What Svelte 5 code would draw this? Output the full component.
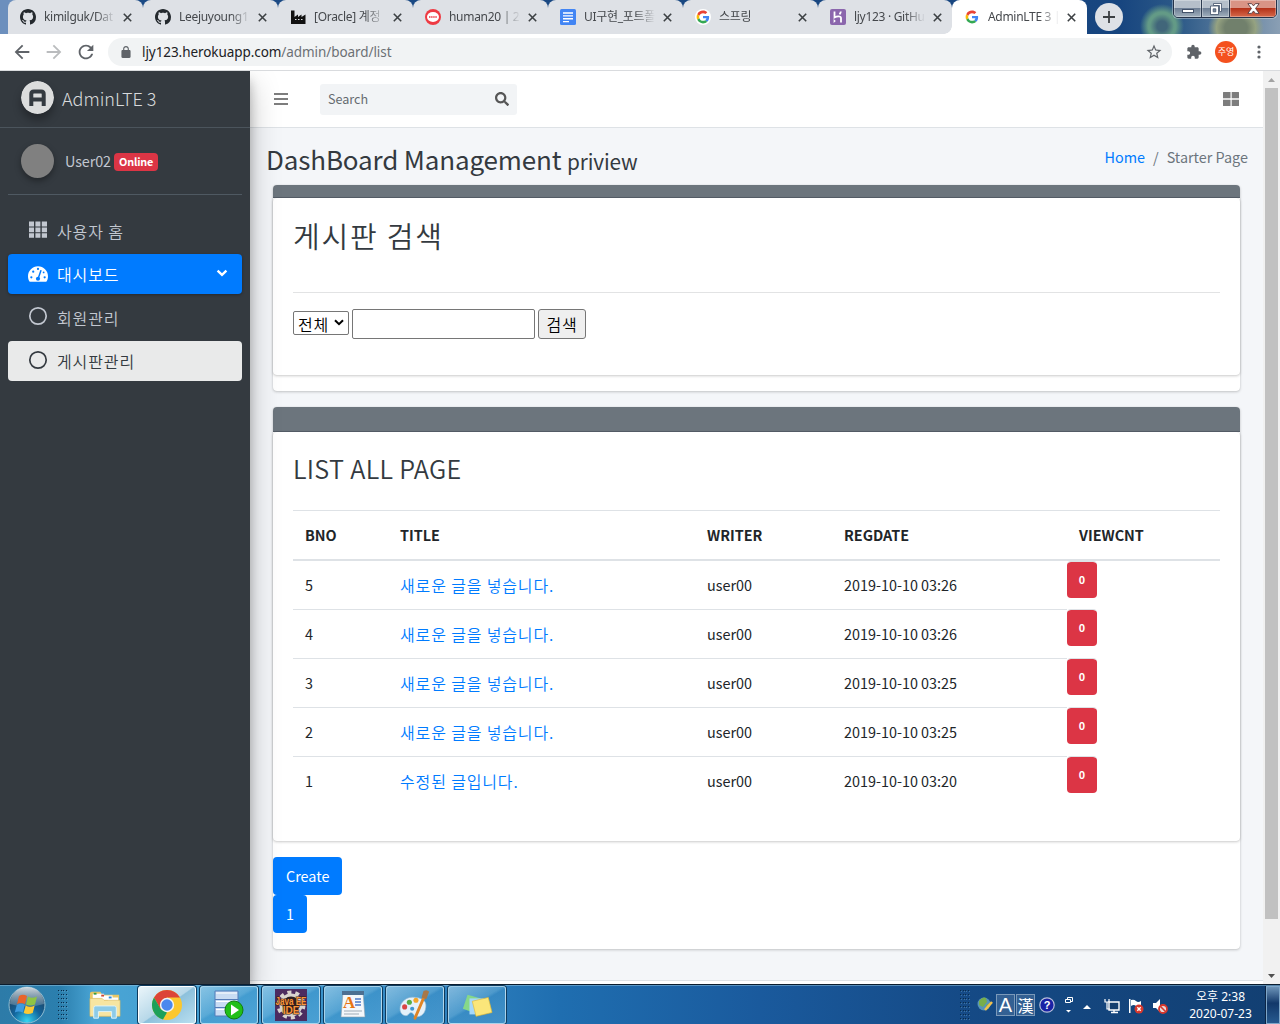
<script>
  const tabs = [
    { icon: 'github', title: 'kimilguk/Dat' },
    { icon: 'github', title: 'Leejuyoung1' },
    { icon: 'factory', title: '[Oracle] 계정' },
    { icon: 'cafe', title: 'human20 | 20' },
    { icon: 'docs', title: 'UI구현_포트폴' },
    { icon: 'google', title: '스프링' },
    { icon: 'heroku', title: 'ljy123 · GitHu' },
    { icon: 'google', title: 'AdminLTE 3 |', active: true },
  ];

  const rows = [
    { bno: 5, title: '새로운 글을 넣습니다.', writer: 'user00', date: '2019-10-10 03:26', views: 0 },
    { bno: 4, title: '새로운 글을 넣습니다.', writer: 'user00', date: '2019-10-10 03:26', views: 0 },
    { bno: 3, title: '새로운 글을 넣습니다.', writer: 'user00', date: '2019-10-10 03:25', views: 0 },
    { bno: 2, title: '새로운 글을 넣습니다.', writer: 'user00', date: '2019-10-10 03:25', views: 0 },
    { bno: 1, title: '수정된 글입니다.', writer: 'user00', date: '2019-10-10 03:20', views: 0 },
  ];
  const gripDots = Array.from({ length: 32 });
</script>

{#snippet favicon(name)}
  {#if name === 'github'}
    <svg class="fav" viewBox="0 0 16 16"><path fill="#24292e" d="M8 0C3.58 0 0 3.58 0 8c0 3.54 2.29 6.53 5.47 7.59.4.07.55-.17.55-.38 0-.19-.01-.82-.01-1.49-2.01.37-2.53-.49-2.69-.94-.09-.23-.48-.94-.82-1.13-.28-.15-.68-.52-.01-.53.63-.01 1.08.58 1.23.82.72 1.21 1.87.87 2.33.66.07-.52.28-.87.51-1.07-1.78-.2-3.64-.89-3.64-3.95 0-.87.31-1.59.82-2.15-.08-.2-.36-1.02.08-2.12 0 0 .67-.21 2.2.82.64-.18 1.32-.27 2-.27.68 0 1.36.09 2 .27 1.53-1.04 2.2-.82 2.2-.82.44 1.1.16 1.92.08 2.12.51.56.82 1.27.82 2.15 0 3.07-1.87 3.75-3.65 3.95.29.25.54.73.54 1.48 0 1.07-.01 1.93-.01 2.2 0 .21.15.46.55.38A8.013 8.013 0 0016 8c0-4.42-3.58-8-8-8z" /></svg>
  {:else if name === 'factory'}
    <svg class="fav" viewBox="0 0 16 16"><path fill="#111" d="M1 15V1.500h3.500V8L8 5.500V8l3.500-2.500V8L15.500 5.500V15z" /><path fill="#dee1e6" d="M5 10h1.500v1H5zM8 10h1.500v1H8zM11 10h1.500v1H11z" /></svg>
  {:else if name === 'cafe'}
    <svg class="fav" viewBox="0 0 16 16"><circle cx="8" cy="8" r="8" fill="#ee3a43" /><ellipse cx="8" cy="8" rx="6" ry="5" fill="#fff" /><path d="M4 8h8" stroke="#ee3a43" stroke-width="1.600" stroke-dasharray="1.500 .6" /></svg>
  {:else if name === 'docs'}
    <svg class="fav" viewBox="0 0 16 16"><rect width="16" height="16" rx="1.500" fill="#4285f4" /><path stroke="#fff" stroke-width="1.400" d="M3 4h10M3 6.900h10M3 9.800h10M3 12.600h6" /></svg>
  {:else if name === 'heroku'}
    <svg class="fav" viewBox="0 0 16 16"><rect width="16" height="16" rx="2" fill="#8b66ad" /><path fill="none" stroke="#fff" stroke-width="1.800" d="M4.500 2.500v6c2-1 6.500-2 6.500.5v4.500M10.800 2.500c0 1-.5 2-1.300 2.800" /><path fill="#fff" d="M3.600 10v4l2.200-2z" /></svg>
  {:else}
    <svg class="fav" viewBox="-6 -6 60 60"><circle cx="24" cy="24" r="30" fill="#fff" /><path fill="#EA4335" d="M24 9.500c3.540 0 6.710 1.220 9.210 3.600l6.850-6.850C35.900 2.380 30.470 0 24 0 14.620 0 6.510 5.380 2.560 13.220l7.980 6.190C12.430 13.720 17.740 9.500 24 9.500z" /><path fill="#4285F4" d="M46.980 24.550c0-1.570-.15-3.090-.38-4.550H24v9.020h12.940c-.58 2.960-2.260 5.480-4.780 7.180l7.730 6c4.510-4.180 7.090-10.360 7.090-17.650z" /><path fill="#FBBC05" d="M10.530 28.590c-.48-1.450-.76-2.990-.76-4.590s.27-3.140.76-4.590l-7.980-6.190C.92 16.460 0 20.120 0 24c0 3.880.92 7.540 2.560 10.780l7.970-6.190z" /><path fill="#34A853" d="M24 48c6.480 0 11.930-2.130 15.890-5.810l-7.730-6c-2.150 1.450-4.920 2.300-8.160 2.300-6.260 0-11.570-4.220-13.470-9.910l-7.980 6.190C6.510 42.620 14.620 48 24 48z" /></svg>
  {/if}
{/snippet}

{#snippet grip()}
  <div class="grip">{#each gripDots as _}<i></i>{/each}</div>
{/snippet}

<div class="screen">
  <div class="tabstrip">
    {#each tabs as tab}
      <div class="tab" class:active={tab.active}>
        {@render favicon(tab.icon)}
        <span class="tab-title">{tab.title}</span>
        <svg class="close" viewBox="0 0 8 8"><path d="M.7.7l6.600 6.600M7.300.7L.7 7.300" /></svg>
      </div>
    {/each}
    <div class="newtab"><svg viewBox="0 0 14 14"><path d="M7 1v12M1 7h12" /></svg></div>
    <div class="wallpaper"></div>
    <div class="winctl">
      <span class="min"><i></i></span>
      <span class="max"><svg viewBox="0 0 12 12"><path fill="#fff" stroke="#43526a" stroke-width=".8" fill-rule="evenodd" d="M3.500.5h8v8h-2v-6h-6z" /><path fill="#fff" stroke="#43526a" stroke-width=".8" fill-rule="evenodd" d="M.5 3h8v8.500h-8zM3.200 5.800v3h2.600v-3z" /></svg></span>
      <span class="cls"><svg viewBox="0 0 12 10"><path fill="#fff" stroke="#53393d" stroke-width=".8" d="M.8.500h3.400L6 2.600 7.800.500h3.400L7.900 5l3.300 4.500H7.800L6 7.300 4.200 9.500H.8L4.100 5z" /></svg></span>
    </div>
  </div>

  <div class="toolbar">
    <svg class="nav-ic" viewBox="0 0 24 24"><path fill="#5f6368" d="M20 11H7.830l5.590-5.590L12 4l-8 8 8 8 1.410-1.410L7.830 13H20v-2z" /></svg>
    <svg class="nav-ic" viewBox="0 0 24 24"><path fill="#babcbe" d="M12 4l-1.410 1.410L16.170 11H4v2h12.170l-5.580 5.590L12 20l8-8z" /></svg>
    <svg class="nav-ic" viewBox="0 0 24 24"><path fill="#5f6368" d="M17.650 6.350C16.200 4.900 14.210 4 12 4c-4.420 0-7.990 3.580-7.990 8s3.570 8 7.990 8c3.730 0 6.840-2.550 7.730-6h-2.080c-.82 2.330-3.040 4-5.650 4-3.310 0-6-2.690-6-6s2.690-6 6-6c1.660 0 3.140.69 4.220 1.780L13 11h7V4l-2.350 2.350z" /></svg>
    <div class="omnibox">
      <svg class="lock" viewBox="4 1 16 21"><path fill="#5f6368" d="M18 8h-1V6c0-2.760-2.240-5-5-5S7 3.240 7 6v2H6c-1.100 0-2 .9-2 2v10c0 1.100.9 2 2 2h12c1.100 0 2-.9 2-2V10c0-1.100-.9-2-2-2zM9 6c0-1.660 1.340-3 3-3s3 1.340 3 3v2H9V6z" /></svg>
      <span class="url">ljy123.herokuapp.com<em>/admin/board/list</em></span>
      <svg class="star" viewBox="0 0 24 24"><path fill="#5f6368" d="M22 9.240l-7.190-.62L12 2 9.190 8.630 2 9.240l5.460 4.730L5.820 21 12 17.270 18.180 21l-1.630-7.030L22 9.240zM12 15.400l-3.760 2.270 1-4.280-3.320-2.880 4.380-.38L12 6.100l1.710 4.040 4.380.38-3.320 2.880 1 4.280L12 15.400z" /></svg>
    </div>
    <svg class="puzzle" viewBox="0 0 24 24"><path fill="#5f6368" d="M20.500 11H19V7c0-1.100-.9-2-2-2h-4V3.500C13 2.120 11.880 1 10.500 1S8 2.120 8 3.500V5H4c-1.100 0-1.990.9-1.990 2v3.800H3.500c1.490 0 2.700 1.210 2.700 2.700s-1.210 2.700-2.700 2.700H2V20c0 1.100.9 2 2 2h3.800v-1.500c0-1.490 1.210-2.700 2.700-2.700 1.490 0 2.700 1.210 2.700 2.700V22H17c1.100 0 2-.9 2-2v-4h1.500c1.380 0 2.500-1.120 2.500-2.500S21.880 11 20.500 11z" /></svg>
    <div class="profile">주영</div>
    <svg class="kebab" viewBox="0 0 4 14"><circle cx="2" cy="2" r="1.600" /><circle cx="2" cy="7" r="1.600" /><circle cx="2" cy="12" r="1.600" /></svg>
  </div>

  <div class="page">
    <aside class="sidebar">
      <div class="brand">
        <svg class="logo" viewBox="0 0 33 33"><circle cx="16.500" cy="16.500" r="16.500" fill="#dcdddd" /><path fill="none" stroke="#343a40" stroke-width="4" d="M10.300 25V13q0-2.500 2.500-2.500h7.400q2.500 0 2.500 2.500v12M10.300 18.500h12.400" /></svg>
        <span>AdminLTE 3</span>
      </div>
      <div class="user"><i class="avatar"></i><span class="uname">User02</span><b class="online">Online</b></div>
      <nav>
        <div class="item">
          <svg class="solid" viewBox="0 0 20 17"><path fill="#c2c7d0" d="M1 0h5v5H1zM7.400 0h5v5h-5zM13.800 0h5.200v5h-5.200zM1 6h5v4.700H1zM7.400 6h5v4.700h-5zM13.800 6h5.200v4.700h-5.200zM1 11.700h5v4.600H1zM7.400 11.700h5v4.600h-5zM13.800 11.700h5.200v4.600h-5.200z" /></svg>
          <span>사용자 홈</span>
        </div>
        <div class="item blue">
          <svg class="solid" viewBox="0 0 576 512"><path fill="#fff" d="M288 32C128.940 32 0 160.940 0 320c0 52.800 14.250 102.260 39.060 144.800 5.610 9.620 16.300 15.200 27.440 15.200h443c11.140 0 21.830-5.580 27.440-15.200C561.750 422.260 576 372.800 576 320c0-159.060-128.940-288-288-288z" /><g fill="#007bff"><circle cx="288" cy="110" r="32" /><circle cx="96" cy="352" r="32" /><circle cx="150" cy="190" r="32" /><circle cx="480" cy="352" r="32" /><circle cx="450" cy="210" r="26" /></g><path stroke="#007bff" stroke-width="42" stroke-linecap="round" d="M370 160L296 380" /><circle cx="288" cy="392" r="60" fill="#007bff" /></svg>
          <span>대시보드</span>
          <svg class="chev" viewBox="0 0 12 8"><path d="M1.600 1.600L6 5.800l4.400-4.200" /></svg>
        </div>
        <div class="item"><svg viewBox="0 0 20 20"><circle cx="10" cy="10" r="8.200" fill="none" stroke="#c2c7d0" stroke-width="1.700" /></svg><span>회원관리</span></div>
        <div class="item light"><svg viewBox="0 0 20 20"><circle cx="10" cy="10" r="8.200" fill="none" stroke="#343a40" stroke-width="1.700" /></svg><span>게시판관리</span></div>
      </nav>
    </aside>

    <main>
      <div class="navbar">
        <svg class="bars" viewBox="0 0 14 12"><path d="M0 1h14M0 6h14M0 11h14" stroke="#7d7d7d" stroke-width="2" /></svg>
        <div class="search"><span>Search</span><svg viewBox="0 0 512 512"><path fill="#565656" d="M505 442.700L405.300 343c-4.500-4.500-10.600-7-17-7H372c27.600-35.300 44-79.700 44-128C416 93.100 322.900 0 208 0S0 93.100 0 208s93.100 208 208 208c48.300 0 92.700-16.400 128-44v16.300c0 6.400 2.500 12.500 7 17l99.700 99.700c9.400 9.400 24.600 9.400 33.900 0l28.300-28.300c9.400-9.400 9.400-24.600.1-34zM208 336c-70.700 0-128-57.200-128-128 0-70.700 57.200-128 128-128 70.700 0 128 57.200 128 128 0 70.700-57.200 128-128 128z" /></svg></div>
        <svg class="thl" viewBox="0 0 16 14"><path fill="#7d7d7d" d="M.5 0h7v6.300H0V.5q0-.5.5-.5zM8.700 0h6.800q.5 0 .5.500v5.800H8.700zM0 7.700h7.500V14h-7q-.5 0-.5-.5zM8.700 7.700H16v5.800q0 .5-.5.500H8.700z" /></svg>
      </div>

      <div class="content-head">
        <h1>DashBoard Management <small>priview</small></h1>
        <div class="crumb"><a href="#home">Home</a><span>/</span><span class="here">Starter Page</span></div>
      </div>

      <section class="card first">
        <div class="cap"></div>
        <div class="inner">
          <h3 class="kr-head">게시판 검색</h3>
          <hr />
          <div class="form">
            <div class="select"><span>전체</span><svg viewBox="0 0 10 7"><path d="M1 1.200l4 4 4-4" /></svg></div>
            <div class="input"></div>
            <div class="btn">검색</div>
          </div>
        </div>
      </section>

      <section class="card second">
        <div class="cap"></div>
        <div class="inner">
          <h3>LIST ALL PAGE</h3>
          <div class="table">
            <div class="row head"><span>BNO</span><span>TITLE</span><span>WRITER</span><span>REGDATE</span><span>VIEWCNT</span></div>
            {#each rows as r}
              <div class="row">
                <span>{r.bno}</span><span class="link">{r.title}</span><span>{r.writer}</span><span>{r.date}</span><b class="badge">{r.views}</b>
              </div>
            {/each}
          </div>
        </div>
        <div class="actions">
          <div class="primary">Create</div>
          <div class="primary">1</div>
        </div>
      </section>
      <footer></footer>
    </main>

    <div class="scroll">
      <svg viewBox="0 0 17 17"><path fill="#a3a3a3" d="M5 11l3.500-4 3.500 4z" /></svg>
      <div class="thumb"></div>
      <svg viewBox="0 0 17 17"><path fill="#505050" d="M5 7l3.500 4L12 7z" /></svg>
    </div>
  </div>

  <div class="taskbar">
    <svg class="orb" viewBox="0 0 38 38">
      <defs>
        <radialGradient id="orbfill" cx=".5" cy=".95" r=".9"><stop offset="0" stop-color="#35d6f2" /><stop offset=".45" stop-color="#12649c" /><stop offset="1" stop-color="#24384f" /></radialGradient>
        <linearGradient id="gloss" x2="0" y2="1"><stop offset="0" stop-color="#e4edf2" stop-opacity=".9" /><stop offset="1" stop-color="#9fb6c4" stop-opacity=".3" /></linearGradient>
      </defs>
      <circle cx="19" cy="19" r="18" fill="url(#orbfill)" stroke="#8fbdd2" />
      <path fill="url(#gloss)" d="M2 18a17 17 0 0134 0q-17 5-34 0z" />
      <path fill="#e9642a" d="M11 10q4-2.500 8 0l-2 8q-4-2-8 0z" /><path fill="#8fc444" d="M20 10.500q4 2.500 9 0l-2 8q-5 2-9 0z" />
      <path fill="#3d9be0" d="M8.800 19q4-2.500 8 0l-2 7.500q-4-2-8 0z" /><path fill="#fbc935" d="M17.700 19.500q4 2.500 9 0l-2 7.500q-5 2-9 0z" />
    </svg>
    {@render grip()}
    <div class="task plain"><svg viewBox="0 0 34 30"><path fill="#e8c765" d="M1 3q0-2 2-2h9l2 3h18v21q0 2-2 2H3q-2 0-2-2z" /><path fill="#fff" d="M4 3h12v5H4zM12 5h13v5H12zM20 7h11v5H20z" /><path fill="#3a9b3d" d="M5 2h3v2H5z" /><path fill="#cc4734" d="M13 4h3v2h-3z" /><path fill="#2e8bd8" d="M21 6h3v2h-3z" /><path fill="#f7e5a1" stroke="#d7b75c" stroke-width=".6" d="M1 8h13l2 2h17v17H1z" /><path fill="#8ccbe8" stroke="#dff3fb" d="M5 18q0-2 2-2h20q2 0 2 2v11h-5v-7H10v7H5z" /></svg></div>
    <div class="task on"><svg viewBox="0 0 32 32"><circle cx="16" cy="16" r="15" fill="#fbc72e" /><path fill="#dc4437" d="M3 8.500A15 15 0 0129 8.500H16L9.500 20z" /><path fill="#1da05a" d="M3 8.500l6.500 11.300 6.500 3.700-4 7A15 15 0 013 8.500z" /><circle cx="16" cy="16" r="7.200" fill="#f2f4f5" /><circle cx="16" cy="16" r="5.700" fill="#4a88ee" /></svg></div>
    <div class="task"><svg viewBox="0 0 32 32"><path fill="#c9dcf3" stroke="#557cb9" d="M2 2h23v25H2z" /><path stroke="#557cb9" d="M2 10.500h23M2 18.500h23" /><path stroke="#fff" d="M3 4h21M3 12.500h21M3 20.500h21" /><circle cx="21" cy="21" r="9" fill="#21bf18" stroke="#117c0d" /><path fill="#fff" d="M18 15.500l8 5.500-8 5.500z" /></svg></div>
    <div class="task"><svg viewBox="0 0 32 32"><rect width="32" height="32" fill="#4c2c60" /><circle cx="16" cy="16" r="12.500" fill="none" stroke="#d9d4cf" stroke-width="4" stroke-dasharray="4 3.850" /><circle cx="16" cy="16" r="10" fill="#2a2024" stroke="#d9d4cf" stroke-width="3" /><text x="16" y="15.500" text-anchor="middle" textLength="31" lengthAdjust="spacingAndGlyphs">Java EE</text><text x="16" y="24.500" text-anchor="middle">IDE</text></svg></div>
    <div class="task"><svg viewBox="0 0 32 32"><path fill="#f4f7fa" stroke="#8a9dad" stroke-width=".6" d="M6 3h20l2 25H4z" /><path fill="#4c6f91" d="M5 2h22v4H5z" /><text class="wp" x="6" y="19">A</text><path stroke="#4c79c9" stroke-width="1.500" d="M18 10h6M18 13h6M18 16h6" /><path stroke="#9eabb6" d="M7 22h18M7 25h15" /></svg></div>
    <div class="task"><svg viewBox="0 0 34 32"><path fill="#e4f1fa" stroke="#93b8d3" stroke-width=".7" d="M18 8C8 6 1 13 1 20s7 9 9 6 5-2 6 1 10 2 12-6-1-12-10-13z" /><circle cx="6" cy="18" r="2.700" fill="#d94545" /><circle cx="11" cy="13" r="2.700" fill="#57ae45" /><circle cx="18" cy="11" r="2.700" fill="#f3a72c" /><circle cx="14" cy="20" r="2.200" fill="#4196cf" /><path stroke="#e08525" stroke-width="3" stroke-linecap="round" d="M26 9L17 30" /><path fill="#a77747" d="M24 8l2-7q4-2 6 1l-3 8z" /></svg></div>
    <div class="task"><svg viewBox="0 0 34 32"><path fill="#86d889" d="M7 5l14 4-5 16L2 20z" /><path fill="#a5d8fb" d="M9 9h15v17H9z" /><path fill="#fbe67a" stroke="#e0b934" stroke-width=".7" d="M12 12l17-4 4 16-17 4z" /></svg></div>

    <div class="tray">
      {@render grip()}
      <svg class="globe" viewBox="0 0 16 18"><circle cx="7" cy="8" r="6.500" fill="#5894b9" /><path fill="#78ae4b" d="M2 5q4-5 7-3l1 4-4 5-4-2zM9 9l4-2-1 5-3 2z" /><path stroke="#f1c14d" stroke-width="2.500" d="M15 6l-7 8" /></svg>
      <span class="ime a">A</span><span class="ime h">漢</span>
      <svg class="help" viewBox="0 0 16 16"><circle cx="8" cy="8" r="7.200" fill="#1a22a5" stroke="#b9bfdb" stroke-width="1.200" /><text x="8" y="12" text-anchor="middle">?</text></svg>
      <svg class="mini" viewBox="0 0 10 18"><path fill="none" stroke="#fff" d="M3.500 4V1.500h5v4H6M1.500 3.500h5v3h-5z" /><path fill="#fff" d="M2 14h5l-2.500 2.500z" /></svg>
      <svg class="up" viewBox="0 0 8 4"><path fill="#fff" d="M0 4l4-4 4 4z" /></svg>
      <svg class="ti" viewBox="0 0 16 16"><path fill="#16406f" stroke="#fff" stroke-width="1.400" d="M5 4h10v8H5zM7 14.500h7M10 12v2" /><path fill="none" stroke="#fff" stroke-width="1.200" d="M1 1v3h4V1M3 4v7h3" /></svg>
      <svg class="ti" viewBox="0 0 16 16"><path fill="#fff" d="M1 1h1.500v14H1zM3 2q3-1 5 1t5 0v6q-3 1-5-1T3 8z" /><circle cx="11" cy="11" r="4.500" fill="#d7372c" /><path stroke="#fff" stroke-width="1.400" d="M9.300 9.300l3.400 3.400M12.700 9.300l-3.400 3.400" /></svg>
      <svg class="ti" viewBox="0 0 16 16"><path fill="#fff" d="M1 5h3l4-4v13l-4-4H1z" /><circle cx="11" cy="11" r="4" fill="#e9d9d9" stroke="#d7372c" stroke-width="1.800" /><path stroke="#d7372c" stroke-width="1.600" d="M8.300 8.300l5.400 5.400" /></svg>
      <div class="clock"><span>오후 2:38</span><span>2020-07-23</span></div>
      <div class="desk"></div>
    </div>
  </div>
</div>

<style>
  :global(body) { margin: 0; overflow: hidden; }
  .screen, .screen * { box-sizing: border-box; }
  svg { display: block; flex: none; }
  .screen { width: 1280px; height: 1024px; display: flex; flex-direction: column; overflow: hidden; font: 14.4px/24px "Noto Sans CJK KR", "Liberation Sans", sans-serif; color: #212529; }

  .tabstrip { height: 34px; flex: none; display: flex; position: relative; padding-left: 8px; background: linear-gradient(90deg, #6c8fbd 0, #6c8fbd 12px, #1b4a85 130px, #17457f 1120px, #2d5a88 1180px, #8a9fb4 1280px); }
  .tab { width: 135px; height: 34px; flex: none; display: flex; align-items: center; padding-left: 12px; background: #dee1e6; border-radius: 8px 8px 0 0; position: relative; font: 12px/16px "Noto Sans", "Noto Sans CJK KR", sans-serif; color: #45484c; }
  .tab:nth-child(-n+6)::after { content: ""; position: absolute; right: -1px; top: 8px; width: 1px; height: 19px; background: #85898e; }
  .tab:nth-child(7) { width: 134px; border-bottom-right-radius: 0; }
  .tab.active { background: #fff; }
  .tab.active::before { content: ""; position: absolute; left: -8px; bottom: 0; width: 8px; height: 8px; background: radial-gradient(circle at 0 0, #dee1e6 7.500px, #fff 8px); }
  .fav { width: 16px; height: 16px; }
  .tab-title { width: 73px; margin-left: 8px; overflow: hidden; white-space: nowrap; mask-image: linear-gradient(90deg, #000 70%, transparent 98%); letter-spacing: -.3px; }
  .close { width: 9px; height: 9px; margin-left: 6px; stroke: #3c4043; stroke-width: 1.400; }
  .newtab { width: 28px; height: 28px; margin: 3px 0 0 8px; border-radius: 50%; background: #dee1e6; display: grid; place-items: center; }
  .newtab svg { width: 14px; height: 14px; stroke: #3c4043; stroke-width: 1.800; }
  .wallpaper { flex: 1; background: radial-gradient(circle at 39px 26px, #41667a 0 5px, #639a86 12px 14px, transparent 22px), radial-gradient(ellipse 28px 24px at 113px 28px, #71806c 0 40%, #95a281 70%, transparent 100%); }
  .winctl { position: absolute; right: 3px; top: -1px; width: 104px; height: 19px; display: flex; border: 1px solid #26344a; border-radius: 0 0 5px 5px; overflow: hidden; box-shadow: 0 0 0 1px #ffffff55; }
  .winctl span { display: grid; place-items: center; background: linear-gradient(#b5bfca 0 48%, #6e7f95 50%, #a1b0bd); border-right: 1px solid #2c3b50; box-shadow: inset 0 0 0 1px #ffffff50; }
  .winctl .min { width: 28px; } .winctl .max { width: 28px; }
  .winctl .cls { flex: 1; border: 0; background: linear-gradient(#d99485 0 46%, #b5331a 50%, #d6694b); }
  .min i { width: 12px; height: 4px; margin-top: 4px; background: #fff; border: 1px solid #43526a; }
  .max svg { width: 12px; height: 12px; } .cls svg { width: 13px; height: 11px; }

  .toolbar { height: 37px; flex: none; display: flex; align-items: center; background: #fff; border-bottom: 1px solid #d9dbde; padding: 0 0 0 11px; }
  .nav-ic { width: 22px; height: 22px; margin-right: 10px; }
  .omnibox { width: 1064px; height: 28px; margin-left: 1px; border-radius: 14px; background: #f1f3f4; display: flex; align-items: center; padding: 0 9px 0 13px; }
  .lock { width: 10px; height: 12px; }
  .url { margin-left: 11px; flex: 1; font: 13.500px/20px "Noto Sans", sans-serif; letter-spacing: -.07px; color: #202124; white-space: nowrap; }
  .url em { font-style: normal; color: #6c7074; }
  .star { width: 18px; height: 18px; }
  .puzzle { width: 16px; height: 16px; margin-left: 14px; }
  .profile { width: 22px; height: 22px; margin-left: 13px; border-radius: 50%; background: #f4511e; color: #fff; font-size: 9px; line-height: 21px; text-align: center; }
  .kebab { width: 4px; height: 14px; margin-left: 20px; fill: #5f6368; }

  .page { height: 913px; flex: none; display: flex; background: #f4f6f9; overflow: hidden; }
  .sidebar { width: 250px; flex: none; background: #343a40; color: #c2c7d0; z-index: 1; box-shadow: 0 14px 28px rgba(0,0,0,.25), 0 10px 10px rgba(0,0,0,.22); }
  .brand { height: 57px; display: flex; align-items: center; padding: 0 0 2px 21px; border-bottom: 1px solid #4b545c; font-size: 18px; font-weight: 300; color: #d8dadc; }
  .brand span { margin-left: 8px; }
  .logo { width: 33px; height: 33px; margin-top: -2px; border-radius: 50%; box-shadow: 0 6px 8px rgba(0,0,0,.3); }
  .user { height: 67px; margin: 0 8px; padding-left: 13px; display: flex; align-items: center; border-bottom: 1px solid #4f5962; }
  .avatar { width: 33px; height: 34px; border-radius: 50%; background: #808080; box-shadow: 0 3px 6px rgba(0,0,0,.35); }
  .uname { margin: 0 3px 0 11px; letter-spacing: -.1px; }
  .online { height: 18px; padding: 0 5px; border-radius: 4px; background: #dc3545; color: #fff; font-size: 10.800px; letter-spacing: -.15px; line-height: 17px; margin-top: 2px; }
  nav { padding: 15px 8px 0; }
  .item { height: 40px; margin-bottom: 3.600px; padding: 1px 14px 0 20px; display: flex; align-items: center; border-radius: 4px; font-size: 16px; font-weight: 350; letter-spacing: .9px; }
  .item > svg:first-child { width: 20px; height: 20px; margin-top: -3px; }
  .item > svg.solid { margin-top: -1px; }
  .item span { margin-left: 9px; flex: 1; }
  .item.blue { background: #007bff; color: #fff; box-shadow: 0 1px 3px rgba(0,0,0,.3); }
  .item.light { background: #e9eaea; color: #343a40; }
  .item .chev { width: 12px; height: 8px; margin-top: -3px; fill: none; stroke: #fff; stroke-width: 2.400; }

  main { width: 1013px; display: flex; flex-direction: column; }
  .navbar { height: 57px; flex: none; background: #fff; border-bottom: 1px solid #dee2e6; display: flex; align-items: center; padding: 0 24px; }
  .bars { width: 14px; height: 12px; }
  .search { width: 197px; height: 31px; margin-left: 32px; border-radius: 3px; background: #f2f4f6; display: flex; align-items: center; justify-content: space-between; padding: 0 8px; font-size: 12.600px; color: #656b70; }
  .search svg { width: 14px; height: 14px; }
  .thl { width: 16px; height: 14px; margin-left: auto; }
  .content-head { height: 57px; flex: none; display: flex; justify-content: space-between; padding: 14px 15px 0 16px; }
  h1 { margin: 0; font-weight: 400; font-size: 26px; letter-spacing: -.15px; line-height: 34px; color: #343a40; white-space: pre; }
  small { font-size: 20.800px; }
  .crumb { display: flex; gap: 8px; line-height: 30px; color: #6c757d; }
  .crumb a { color: #007bff; text-decoration: none; }
  .card { margin: 0 23px 16px; flex: none; background: #fff; border-radius: 4px; box-shadow: 0 0 1px rgba(0,0,0,.125), 0 1px 3px rgba(0,0,0,.2); }
  .card .cap { background: #6c757d; border-bottom: 1px solid #57606a; border-radius: 4px 4px 0 0; }
  .first { height: 206px; } .first .cap { height: 13px; }
  .second { height: 542px; } .second .cap { height: 25px; }
  .inner { padding: 20px; border-radius: 4px; box-shadow: 0 0 1px rgba(0,0,0,.125), 0 1px 3px rgba(0,0,0,.2); }
  .first .inner { height: 177px; } .second .inner { height: 409px; }
  h3 { margin: 0; font-weight: 350; font-size: 25.200px; letter-spacing: .3px; line-height: 32px; height: 58px; color: #343a40; }
  h3.kr-head { font-size: 29px; letter-spacing: 1.800px; height: 74px; line-height: 34px; }
  hr { margin: 0 0 16px; border: 0; border-top: 1px solid #e2e3e4; }
  .form { display: flex; align-items: center; gap: 3px; height: 30px; color: #000; font-size: 16px; font-weight: 350; }
  .select { width: 56px; height: 24px; margin-top: -2px; border: 1px solid #767676; border-radius: 2px; padding: 2px 4px 0; display: flex; align-items: center; justify-content: space-between; letter-spacing: .9px; }
  .select svg { width: 10px; height: 7px; margin-top: -3px; fill: none; stroke: #000; stroke-width: 2; }
  .input { width: 183px; height: 30px; border: 1px solid #767676; border-radius: 2px; }
  .btn { width: 48px; height: 30px; border: 1px solid #767676; border-radius: 3px; background: #efefef; text-align: center; line-height: 29px; letter-spacing: .9px; }
  .row { display: grid; grid-template-columns: 95px 307px 137px 223px 1fr; height: 49px; align-items: center; position: relative; background: linear-gradient(#dee2e6, #dee2e6) 0 0 / 774px 1px no-repeat; }
  .row > span { padding: 0 0 0 12px; white-space: nowrap; }
  .row.head { height: 51px; background: none; border-top: 1px solid #dee2e6; border-bottom: 2px solid #dee2e6; font-weight: 700; }
  .row.head > span { padding-top: 0; }
  .row.head > span:last-child { padding-left: 24px; }
  .row.head + .row { height: 48px; background: none; }
  .row .link { color: #007bff; font-size: 16px; font-weight: 350; letter-spacing: .85px; }
  .badge { align-self: start; justify-self: start; margin-left: 12px; width: 30px; height: 37px; border-top: 1px solid #dee2e6; border-radius: 4px; background: #dc3545; background-clip: padding-box; color: #fff; font-size: 10.800px; line-height: 34px; text-align: center; }
  .actions { padding-top: 16px; display: flex; flex-direction: column; align-items: flex-start; }
  .primary { height: 38px; padding: 0 13px; border-radius: 4px; background: #007bff; color: #fff; line-height: 37px; }
  footer { flex: 1; margin-top: 15px; background: #fff; border-top: 1px solid #dee2e6; }
  .scroll { width: 17px; background: #f1f1f1; display: flex; flex-direction: column; align-items: center; }
  .scroll svg { width: 17px; height: 17px; }
  .thumb { width: 13px; height: 831px; background: #c1c1c1; margin-bottom: auto; }

  .taskbar { height: 40px; flex: none; display: flex; align-items: center; padding-left: 8px; border-top: 1px solid #0b1d2f; box-shadow: inset 0 1px #8fc0db88; background: linear-gradient(90deg, #2d7ba8 0, #2b7fae 60px, #4aa5d5 95px, #3e9ad0 260px, #3083c0 440px, #1f6eb0 560px, #1a5a9d 760px, #154a86 960px, #123f72 1280px); }
  .orb { width: 38px; height: 38px; }
  .grip { width: 9px; height: 31px; margin-left: 12px; display: grid; grid-template-columns: repeat(4, 1px); grid-auto-rows: 1px; column-gap: 1.500px; row-gap: 3px; align-content: center; }
  .grip i { background: #0b2c4a; box-shadow: 1px 1px #7fb1cf66; }
  .task { width: 58px; height: 38px; margin: 0 4px 0 0; flex: none; display: grid; place-items: center; border: 1px solid #d5edf8aa; border-radius: 3px; box-shadow: 0 0 0 1px #0d3a5d; background: linear-gradient(150deg, #b5dcf099, #6fb5dc88 45%, #4b9fd066 50%, #68b5e066); }
  .task.plain { border-color: transparent; box-shadow: none; background: none; margin-left: 9px; }
  .task.on { background: linear-gradient(145deg, #eaf5fa, #b7d8e9 50%, #8dc1dc 52%, #b9dff0); border-color: #fff; }
  .task svg { width: 32px; height: 32px; }
  .task text { font: 700 10px "Liberation Sans", sans-serif; fill: #f9963c; stroke: #3a1c12; stroke-width: 1.200px; paint-order: stroke; }
  .task text.wp { font: 700 17px "Liberation Serif", serif; fill: #e87413; stroke: none; }
  .tray { margin-left: auto; display: flex; align-items: center; height: 40px; color: #fff; }
  .tray .grip { margin: 0 8px 0 0; }
  .globe { width: 16px; height: 18px; margin-right: 3px; }
  .ime { width: 19px; height: 22px; border: 1px solid #b9cbdc88; background: #ffffff22; text-align: center; line-height: 20px; margin-right: 1px; font-size: 16px; }
  .ime.a { font-size: 20px; font-family: "Liberation Sans", sans-serif; }
  .help { width: 16px; height: 16px; margin: 0 9px 0 3px; }
  .help text { font: 700 11px "Liberation Sans", sans-serif; fill: #fff; }
  .mini { width: 10px; height: 18px; margin-right: 9px; }
  .up { width: 8px; height: 4px; margin: 5px 13px 0 0; }
  .ti { width: 16px; height: 16px; margin: 3px 8px 0 0; }
  .clock { width: 89px; display: flex; flex-direction: column; align-items: center; font: 12px/17px "Noto Sans", "Noto Sans CJK KR", sans-serif; margin-right: 1px; }
  .desk { width: 14px; height: 38px; border: 1px solid #7ea6c8; background: linear-gradient(#6c93b8, #12386a 45%, #275a8f); box-shadow: -1px 0 #0b2445; }
</style>
